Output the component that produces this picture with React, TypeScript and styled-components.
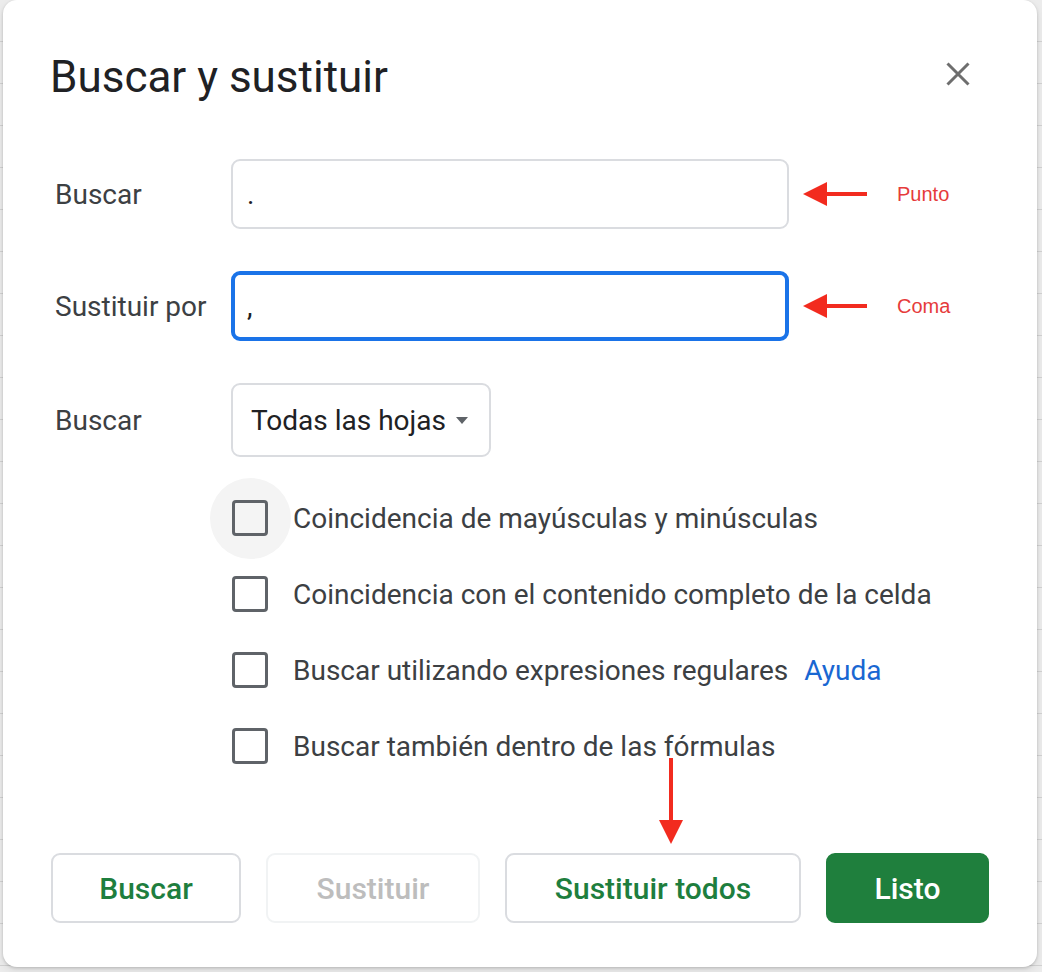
import React from "react";
import styled, { createGlobalStyle } from "styled-components";

const GlobalStyle = createGlobalStyle`
  html, body { margin: 0; padding: 0; }
  body {
    width: 1042px;
    height: 972px;
    overflow: hidden;
    background-color: #ececec;
    background-image: repeating-linear-gradient(
      to bottom,
      transparent 0,
      transparent 41px,
      #d2d2d2 41px,
      #d2d2d2 42px
    );
    font-family: Roboto, "Noto Sans", Arial, sans-serif;
  }
`;

const Page = styled.div`
  padding-left: 3px;
  height: 972px;
  box-sizing: border-box;
`;

const Dialog = styled.div`
  position: relative;
  width: 1034px;
  height: 967px;
  box-sizing: border-box;
  padding: 51px 48px 44px 48px;
  background: #ffffff;
  border-radius: 14px;
  box-shadow: 0 1px 3px rgba(0, 0, 0, 0.18), 0 4px 10px rgba(0, 0, 0, 0.08);
  display: flex;
  flex-direction: column;
`;

const Header = styled.div`
  display: flex;
  justify-content: space-between;
  align-items: flex-start;
  height: 52px;
`;

const Title = styled.h1`
  margin: 0 0 0 -1px;
  font-family: Roboto, "Noto Sans", sans-serif;
  font-weight: 400;
  font-size: 44px;
  line-height: 52px;
  color: #202124;
`;

const CloseButton = styled.button`
  width: 40px;
  height: 40px;
  margin: 3px 11px 0 0;
  padding: 0;
  border: 0;
  background: transparent;
  display: flex;
  align-items: center;
  justify-content: center;
`;

const Fields = styled.div`
  margin-top: 56px;
  display: grid;
  grid-template-columns: 180px 558px 1fr;
  row-gap: 42px;
  align-items: center;
`;

const FieldLabel = styled.div`
  padding-left: 4px;
  font-size: 28px;
  color: #3c4043;
`;

const TextBox = styled.div<{ $focused?: boolean }>`
  height: 70px;
  box-sizing: border-box;
  display: flex;
  align-items: center;
  border: ${(p) => (p.$focused ? "4px solid #1a73e8" : "2px solid #dadce0")};
  border-radius: 9px;
  padding: 0 ${(p) => (p.$focused ? "12px" : "14px")};
  font-size: 28px;
  color: #202124;
`;

const Annotation = styled.div`
  display: flex;
  align-items: center;
  padding-left: 14px;
`;

const AnnotationText = styled.span`
  margin-left: 30px;
  font-family: "Liberation Sans", Arial, sans-serif;
  font-size: 20px;
  color: #e63b3b;
`;

const Select = styled.div`
  width: 260px;
  height: 74px;
  box-sizing: border-box;
  display: flex;
  align-items: center;
  justify-content: space-between;
  border: 2px solid #dadce0;
  border-radius: 9px;
  padding: 0 21px 0 18px;
  font-size: 28px;
  color: #202124;
`;

const Caret = styled.span`
  width: 0;
  height: 0;
  border-left: 6px solid transparent;
  border-right: 6px solid transparent;
  border-top: 7px solid #5f6368;
`;

const Options = styled.div`
  margin-top: 23px;
  padding-left: 180px;
  display: flex;
  flex-direction: column;
`;

const OptionRow = styled.div`
  position: relative;
  z-index: 0;
  height: 76px;
  display: flex;
  align-items: center;
  font-size: 28px;
  color: #3c4043;
`;

const CheckBox = styled.span<{ $halo?: boolean }>`
  position: relative;
  flex-shrink: 0;
  width: 36px;
  height: 36px;
  margin-left: 1px;
  box-sizing: border-box;
  border: 3.5px solid #5f6368;
  border-radius: 4px;

  &::before {
    content: "";
    display: ${(p) => (p.$halo ? "block" : "none")};
    position: absolute;
    inset: -25.5px;
    border-radius: 50%;
    background: #f4f4f4;
    z-index: -1;
  }
`;

const OptionText = styled.span`
  margin-left: 25px;
`;

const HelpLink = styled.a`
  margin-left: 16px;
  color: #1967d2;
  text-decoration: none;
`;

const Buttons = styled.div`
  margin-top: 69px;
  display: flex;
  gap: 25px;
`;

const Button = styled.button<{ $w: number; $variant?: "default" | "disabled" | "primary" }>`
  width: ${(p) => p.$w}px;
  height: 70px;
  box-sizing: border-box;
  border-radius: 9px;
  border: 2px solid
    ${(p) =>
      p.$variant === "primary" ? "#1f7f3d" : p.$variant === "disabled" ? "#f1f3f4" : "#dadce0"};
  background: ${(p) => (p.$variant === "primary" ? "#1f7f3d" : "#ffffff")};
  color: ${(p) =>
    p.$variant === "primary" ? "#ffffff" : p.$variant === "disabled" ? "#bdbdbd" : "#1e7e3e"};
  font-family: Roboto, "Noto Sans", sans-serif;
  font-weight: 500;
  font-size: 30px;
  padding: 0;
`;

const DownArrow = styled.svg`
  position: absolute;
  left: 656px;
  top: 758px;
`;

const LeftArrow = () => (
  <svg width="64" height="24" viewBox="0 0 64 24">
    <polygon points="0,12 24,0 24,24" fill="#f22b1f" />
    <rect x="22" y="10" width="42" height="4" fill="#f22b1f" />
  </svg>
);

export default function App() {
  return (
    <>
      <GlobalStyle />
      <Page>
        <Dialog>
          <Header>
            <Title>Buscar y sustituir</Title>
            <CloseButton aria-label="Cerrar">
              <svg width="24" height="24" viewBox="0 0 24 24">
                <path d="M1.5 1.5 L22.5 22.5 M22.5 1.5 L1.5 22.5" stroke="#6e6e6e" strokeWidth="3" />
              </svg>
            </CloseButton>
          </Header>

          <Fields>
            <FieldLabel>Buscar</FieldLabel>
            <TextBox>.</TextBox>
            <Annotation>
              <LeftArrow />
              <AnnotationText>Punto</AnnotationText>
            </Annotation>

            <FieldLabel>Sustituir por</FieldLabel>
            <TextBox $focused>,</TextBox>
            <Annotation>
              <LeftArrow />
              <AnnotationText>Coma</AnnotationText>
            </Annotation>

            <FieldLabel>Buscar</FieldLabel>
            <Select>
              <span>Todas las hojas</span>
              <Caret />
            </Select>
            <div />
          </Fields>

          <Options>
            <OptionRow>
              <CheckBox $halo />
              <OptionText>Coincidencia de mayúsculas y minúsculas</OptionText>
            </OptionRow>
            <OptionRow>
              <CheckBox />
              <OptionText>Coincidencia con el contenido completo de la celda</OptionText>
            </OptionRow>
            <OptionRow>
              <CheckBox />
              <OptionText>Buscar utilizando expresiones regulares</OptionText>
              <HelpLink href="#">Ayuda</HelpLink>
            </OptionRow>
            <OptionRow>
              <CheckBox />
              <OptionText>Buscar también dentro de las fórmulas</OptionText>
            </OptionRow>
          </Options>

          <Buttons>
            <Button $w={190}>Buscar</Button>
            <Button $w={214} $variant="disabled">Sustituir</Button>
            <Button $w={296}>Sustituir todos</Button>
            <Button $w={163} $variant="primary">Listo</Button>
          </Buttons>

          <DownArrow width="24" height="86" viewBox="0 0 24 86">
            <rect x="10" y="0" width="4" height="64" fill="#f22b1f" />
            <polygon points="0,62 24,62 12,86" fill="#f22b1f" />
          </DownArrow>
        </Dialog>
      </Page>
    </>
  );
}
